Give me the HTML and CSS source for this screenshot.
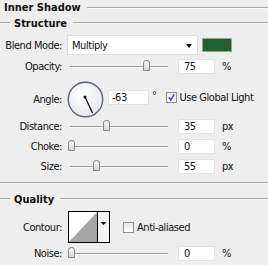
FILE: index.html
```html
<!DOCTYPE html>
<html lang="en">

<head>
    <meta charset="UTF-8">
    <title>Inner Shadow</title>
    <link rel="stylesheet" href="styles.css">
</head>

<body>
    <div class="dialog">
        <div class="legend main"><span>Inner Shadow</span></div>
        <div class="legend sub"><span>Structure</span></div>

        <div class="row blend">
            <span class="lbl">Blend Mode:</span>
            <div class="select">Multiply<span class="arrow"></span></div>
            <div class="swatch"></div>
        </div>

        <div class="row field opacity">
            <span class="lbl">Opacity:</span>
            <div class="slider"><span class="thumb" style="left: 73px"></span></div>
            <div class="num">75</div>
            <span class="unit">%</span>
        </div>

        <div class="row angle">
            <span class="lbl">Angle:</span>
            <svg class="dial" width="37" height="37" viewBox="0 0 37 37">
                <defs>
                    <radialGradient id="dialFill" cx="40%" cy="35%" r="70%">
                        <stop offset="0" stop-color="#ffffff" />
                        <stop offset="1" stop-color="#e4e6ee" />
                    </radialGradient>
                </defs>
                <circle cx="18.5" cy="18.5" r="17.2" fill="url(#dialFill)" stroke="#5d6478" stroke-width="1.4" />
                <line x1="18" y1="16" x2="25.5" y2="32" stroke="#000" stroke-width="1.2" />
                <circle cx="18" cy="16" r="1.5" fill="#000" />
            </svg>
            <div class="num wide">-63</div>
            <span class="deg">°</span>
            <span class="check on">
                <svg width="11" height="11" viewBox="0 0 11 11">
                    <path d="M2.5 5.2 L4.6 8.6 L8.8 1.8" fill="none" stroke="#4a3fb0" stroke-width="1.8" />
                </svg>
            </span>
            <span class="check-text">Use Global Light</span>
        </div>

        <div class="row field distance">
            <span class="lbl">Distance:</span>
            <div class="slider"><span class="thumb" style="left: 33px"></span></div>
            <div class="num">35</div>
            <span class="unit">px</span>
        </div>

        <div class="row field choke">
            <span class="lbl">Choke:</span>
            <div class="slider"><span class="thumb" style="left: -2px"></span></div>
            <div class="num">0</div>
            <span class="unit">%</span>
        </div>

        <div class="row field size">
            <span class="lbl">Size:</span>
            <div class="slider"><span class="thumb" style="left: 23px"></span></div>
            <div class="num">55</div>
            <span class="unit">px</span>
        </div>

        <div class="divider"></div>

        <div class="legend sub quality"><span>Quality</span></div>

        <div class="row contour">
            <span class="lbl">Contour:</span>
            <svg class="curve" width="42" height="32" viewBox="0 0 42 32">
                <rect x="0.5" y="0.5" width="41" height="31" fill="#fff" stroke="#000" />
                <polygon points="1,31 29,1 29,31" fill="#a6a6a6" />
                <line x1="29.5" y1="1" x2="29.5" y2="31" stroke="#000" />
                <rect x="30" y="1" width="11" height="30" fill="#f4f4f4" />
                <polygon points="32.5,11 38.5,11 35.5,14" fill="#000" />
            </svg>
            <span class="check"></span>
            <span class="check-text">Anti-aliased</span>
        </div>

        <div class="row field noise">
            <span class="lbl">Noise:</span>
            <div class="slider"><span class="thumb" style="left: -2px"></span></div>
            <div class="num">0</div>
            <span class="unit">%</span>
        </div>
    </div>
</body>

</html>
```

FILE: styles.css
```css
body {
    margin: 0;
    background-color: #eeeeee;
    font-family: "DejaVu Sans Condensed", "DejaVu Sans", sans-serif;
    font-size: 11px;
    letter-spacing: -0.45px;
    color: #111;
}

.dialog {
    width: 268px;
    height: 265px;
    overflow: hidden;
}

.legend {
    display: flex;
    align-items: center;
    font-weight: bold;
    letter-spacing: 0;
}

.legend span {
    margin-right: 6px;
}

.legend::after,
.legend.sub::before {
    content: "";
    flex: 1;
    border-top: 1px solid #a8a8a8;
    border-bottom: 1px solid #fafafa;
}

.legend.main {
    height: 15px;
    padding-left: 4px;
}

.legend.sub {
    height: 16px;
}

.legend.sub::before {
    flex: none;
    width: 10px;
    margin-right: 4px;
}

.row {
    display: flex;
    align-items: center;
}

.lbl {
    flex: none;
    width: 62px;
    text-align: right;
}

.blend {
    margin-top: 4px;
    height: 20px;
}

.select {
    position: relative;
    box-sizing: border-box;
    margin-left: 5px;
    width: 131px;
    height: 20px;
    padding-left: 4px;
    display: flex;
    align-items: center;
    background-color: #fff;
    border: 1px solid #dcdcdc;
}

.arrow {
    position: absolute;
    right: 5px;
    top: 8px;
    border-left: 3.5px solid transparent;
    border-right: 3.5px solid transparent;
    border-top: 4px solid #000;
}

.swatch {
    margin-left: 4px;
    width: 30px;
    height: 14px;
    box-sizing: border-box;
    background-color: #21602f;
    border: 1px solid #9aa39c;
}

.field {
    height: 15px;
}

.opacity {
    margin-top: 4px;
}

.distance {
    margin-top: 1px;
}

.choke,
.size {
    margin-top: 5px;
}

.slider {
    position: relative;
    flex: none;
    margin-left: 8px;
    width: 98px;
    height: 15px;
}

.slider::before {
    content: "";
    position: absolute;
    left: 0;
    right: 0;
    top: 7px;
    border-top: 1px solid #a0a0a0;
    border-bottom: 1px solid #fdfdfd;
}

.thumb {
    position: absolute;
    top: 1px;
    width: 7px;
    height: 11px;
    box-sizing: border-box;
    background: linear-gradient(#fbfbfb, #d6d6d6);
    border: 1px solid #8a8a8a;
    border-radius: 4px 4px 1px 1px;
}

.num {
    flex: none;
    box-sizing: border-box;
    margin-left: 10px;
    width: 37px;
    height: 15px;
    padding-left: 5px;
    line-height: 14px;
    background-color: #fff;
    border: 1px solid #e2e2e2;
}

.unit {
    margin-left: 7px;
}

.angle {
    margin-top: 6px;
    height: 38px;
}

.dial {
    flex: none;
    margin-left: 5px;
}

.num.wide {
    margin-left: 4px;
    width: 41px;
    padding-left: 3px;
    margin-top: -4px;
}

.deg {
    margin-left: 3px;
    margin-top: -8px;
}

.check {
    flex: none;
    box-sizing: border-box;
    width: 11px;
    height: 11px;
    background: linear-gradient(#e9e9e9, #fdfdfd);
    border: 1px solid #8e8f8f;
    display: flex;
    align-items: center;
    justify-content: center;
}

.check svg {
    display: block;
}

.angle .check {
    margin-left: 9px;
    margin-top: -4px;
}

.check-text {
    margin-left: 3px;
}

.angle .check-text {
    margin-top: -4px;
}

.divider {
    margin-top: 8px;
    border-top: 1px solid #a8a8a8;
    border-bottom: 1px solid #fafafa;
}

.quality {
    margin-top: 7px;
}

.contour {
    margin-top: 4px;
    height: 32px;
}

.curve {
    flex: none;
    margin-left: 6px;
}

.contour .check {
    margin-left: 13px;
}

.noise {
    margin-top: 3px;
}
```
